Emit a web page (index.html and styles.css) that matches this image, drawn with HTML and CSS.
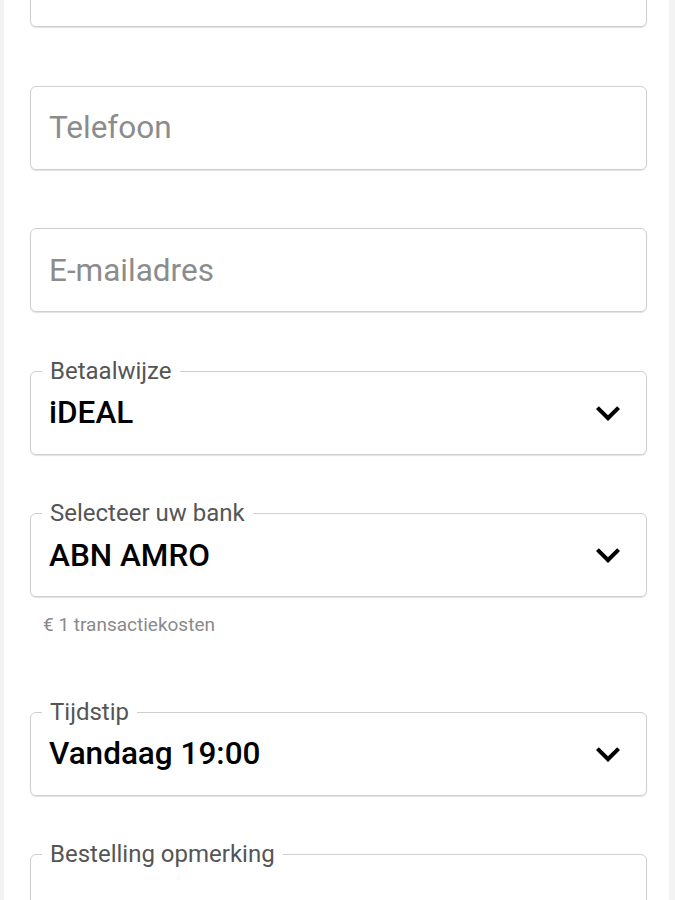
FILE: index.html
```html
<!DOCTYPE html>
<html lang="nl">

<head>
    <meta charset="UTF-8">
    <meta name="viewport" content="width=device-width, initial-scale=1.0">
    <title>Bestellen</title>
    <link rel="stylesheet" href="styles.css">
</head>

<body>
    <div id="page">
        <form id="form">
            <div class="field">
                <div class="box">
                    <input class="input" type="text" placeholder="Naam">
                </div>
            </div>

            <div class="field">
                <div class="box">
                    <input class="input" type="tel" placeholder="Telefoon">
                </div>
            </div>

            <div class="field">
                <div class="box">
                    <input class="input" type="email" placeholder="E-mailadres">
                </div>
            </div>

            <div class="field">
                <div class="box">
                    <span class="label">Betaalwijze</span>
                    <span class="value">iDEAL</span>
                    <svg class="chevron" viewBox="0 0 24 24"><path d="M16.59 8.59L12 13.17 7.41 8.59 6 10l6 6 6-6z"/></svg>
                </div>
            </div>

            <div class="field">
                <div class="box">
                    <span class="label">Selecteer uw bank</span>
                    <span class="value">ABN AMRO</span>
                    <svg class="chevron" viewBox="0 0 24 24"><path d="M16.59 8.59L12 13.17 7.41 8.59 6 10l6 6 6-6z"/></svg>
                </div>
                <p class="helper">€ 1 transactiekosten</p>
            </div>

            <div class="field">
                <div class="box">
                    <span class="label">Tijdstip</span>
                    <span class="value">Vandaag 19:00</span>
                    <svg class="chevron" viewBox="0 0 24 24"><path d="M16.59 8.59L12 13.17 7.41 8.59 6 10l6 6 6-6z"/></svg>
                </div>
            </div>

            <div class="field">
                <div class="box box-tall">
                    <span class="label">Bestelling opmerking</span>
                </div>
            </div>
        </form>
    </div>
</body>

</html>
```

FILE: styles.css
```css
html,
body {
    height: 900px;
    overflow: hidden;
}

body {
    margin: 0;
    background-color: #f3f3f3;
    font-family: Roboto, 'Liberation Sans', sans-serif;
}

#page {
    background-color: #fff;
    margin: 0 6px 0 4px;
    padding: 0 22px 0 26px;
    height: 100%;
}

#form {
    margin: 0;
    padding-top: 1px;
    display: flex;
    flex-direction: column;
}

.field:first-child {
    margin-top: -58px;
}

.field {
    margin-bottom: 58.5px;
}

.box {
    position: relative;
    display: flex;
    align-items: center;
    height: 84px;
    box-sizing: border-box;
    padding: 0 14px 0 18px;
    border: 1px solid #cfcfcf;
    border-radius: 6px;
    box-shadow: 0 1px 1px rgba(0, 0, 0, 0.12);
}

.box-tall {
    height: 160px;
}

.input {
    flex: 1;
    border: none;
    outline: none;
    padding: 0;
    background: transparent;
    font-family: inherit;
    font-size: 31.5px;
    color: #111;
}

.input::placeholder {
    color: #8c8c8c;
}

.label {
    position: absolute;
    top: -13px;
    left: 11px;
    padding: 0 8px;
    background-color: #fff;
    font-size: 24px;
    line-height: 24px;
    color: #555;
}

.value {
    flex: 1;
    font-size: 31.5px;
    font-weight: 500;
    color: #000;
}

.chevron {
    width: 48px;
    height: 48px;
    fill: #000;
}

.helper {
    margin: 14px 0 14px 13px;
    font-size: 19px;
    line-height: 28px;
    color: #8a8a8a;
}
```
